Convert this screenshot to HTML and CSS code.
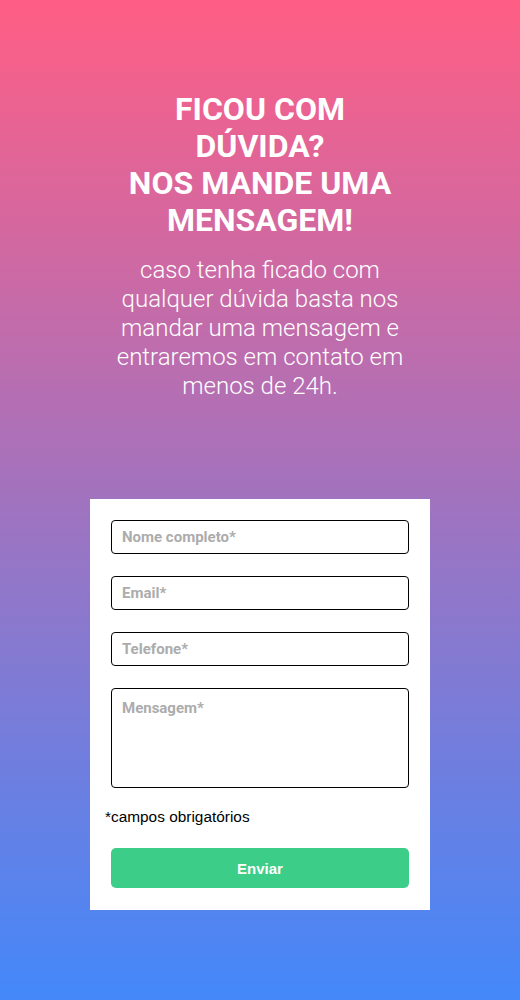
FILE: index.html
```html
<!DOCTYPE html>
<html lang="pt-BR">
<head>
<meta charset="utf-8">
<title>Contato</title>
<link rel="stylesheet" href="styles.css">
</head>
<body>
<main class="page">
  <section class="intro">
    <h1 class="title">FICOU COM DÚVIDA?<br>NOS MANDE UMA MENSAGEM!</h1>
    <p class="lead">caso tenha ficado com qualquer dúvida basta nos mandar uma mensagem e entraremos em contato em menos de 24h.</p>
  </section>
  <form class="card">
    <input class="field" type="text" placeholder="Nome completo*">
    <input class="field" type="email" placeholder="Email*">
    <input class="field" type="tel" placeholder="Telefone*">
    <textarea class="field area" placeholder="Mensagem*"></textarea>
    <p class="note">*campos obrigatórios</p>
    <button class="send" type="button">Enviar</button>
  </form>
</main>
</body>
</html>
```
FILE: styles.css
```css
* { box-sizing: border-box; }
html, body { margin: 0; height: 100%; }
body {
  background: linear-gradient(180deg, #ff5e84 0%, #4388fa 100%);
  font-family: Roboto, "Liberation Sans", Arial, sans-serif;
}
.page {
  min-height: 1000px;
  display: flex;
  flex-direction: column;
  align-items: center;
  padding-top: 91px;
}
.intro {
  width: 300px;
  text-align: center;
  color: #fff;
}
.title {
  margin: 0;
  font-family: Roboto, sans-serif;
  font-weight: 700;
  font-size: 32px;
  line-height: 37px;
}
.lead {
  margin: 17px 0 0;
  font-family: Roboto, sans-serif;
  font-weight: 300;
  font-size: 24px;
  line-height: 29px;
}
.card {
  margin-top: 98px;
  width: 340px;
  background: #fff;
  padding: 21px 21px 22px;
  display: flex;
  flex-direction: column;
}
.field {
  width: 298px;
  height: 34px;
  border: 1px solid #000;
  border-radius: 4px;
  padding: 0 10px;
  margin: 0 0 22px;
  font-family: Roboto, sans-serif;
  font-weight: 700;
  font-size: 15px;
  color: #333;
  background: #fff;
  outline: none;
}
.field::placeholder { color: #acacac; }
.area {
  height: 100px;
  padding-top: 10px;
  resize: none;
  margin-bottom: 20px;
}
.note {
  margin: 0 0 0 -6px;
  font-family: "Liberation Sans", Arial, sans-serif;
  font-size: 15.4px;
  line-height: 18px;
  color: #000;
}
.send {
  margin-top: 22px;
  width: 298px;
  height: 40px;
  border: none;
  border-radius: 5px;
  background: #3ccd88;
  color: #fff;
  font-family: "Liberation Sans", Arial, sans-serif;
  font-weight: 700;
  font-size: 15px;
}
```
